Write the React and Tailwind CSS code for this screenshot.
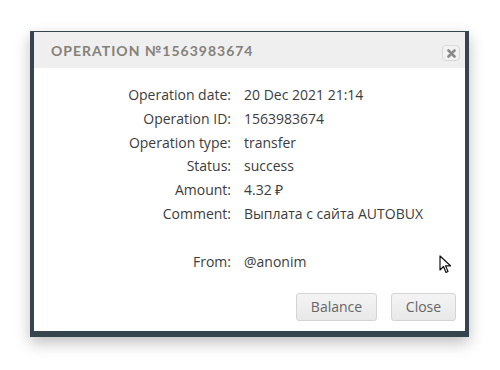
const rows = [
  ["Operation date:", "20 Dec 2021 21:14"],
  ["Operation ID:", "1563983674"],
  ["Operation type:", "transfer"],
  ["Status:", "success"],
  ["Amount:", "4.32 ₽"],
  ["Comment:", "Выплата с сайта AUTOBUX"],
];

export default function App() {
  return (
    <div className="relative w-[500px] h-[370px] bg-white font-['Open_Sans',sans-serif]">
      <div className="absolute left-[30px] top-[31px] w-[439px] border-t border-l-4 border-r-4 border-b-[6px] border-[#36444d] bg-white shadow-[0_6px_14px_rgba(0,0,0,0.25)]">
        {/* Header */}
        <div className="h-[36px] bg-[#efefef] flex items-center justify-between pl-[17px] pr-[5px]">
          <h2 className="text-[14px] font-bold tracking-[1px] text-[#858079] font-['Lato',sans-serif]">
            OPERATION №1563983674
          </h2>
          <button className="w-[18px] h-[16px] mt-[6px] rounded-sm border border-[#d8d8d8] bg-[#f2f2f2] flex items-center justify-center">
            <svg width="9" height="9" viewBox="0 0 9 9">
              <path d="M1.5 1.5 L7.5 7.5 M7.5 1.5 L1.5 7.5" stroke="#8a8a8a" strokeWidth="2.6" strokeLinecap="round" />
            </svg>
          </button>
        </div>

        {/* Body */}
        <div className="pt-[15px] text-[14px] text-[#3c3c3c]">
          {rows.map(([label, value]) => (
            <div key={label} className="flex h-[23.7px] items-center">
              <span className="w-[197px] text-right">{label}</span>
              <span className="ml-[13px]">{value}</span>
            </div>
          ))}
          <div className="flex h-[23.7px] items-center mt-[25px]">
            <span className="w-[197px] text-right">From:</span>
            <span className="ml-[13px]">@anonim</span>
          </div>
        </div>

        {/* Footer */}
        <div className="flex justify-end gap-[14px] pt-[19px] pb-[10px] pr-[9px]">
          <button className="w-[81px] h-[28px] rounded-[3px] border border-[#d4d4d4] bg-gradient-to-b from-[#f4f4f4] to-[#e8e8e8] text-[14px] text-[#666]">
            Balance
          </button>
          <button className="w-[65px] h-[28px] rounded-[3px] border border-[#d4d4d4] bg-gradient-to-b from-[#f4f4f4] to-[#e8e8e8] text-[14px] text-[#666]">
            Close
          </button>
        </div>
      </div>

      {/* Mouse cursor */}
      <svg
        className="absolute left-[439px] top-[255px]"
        width="13"
        height="20"
        viewBox="0 0 13 20"
      >
        <path
          d="M1 1 L1 15 L4.5 11.5 L7 17.5 L9 16.5 L6.5 10.8 L11.5 10.8 Z"
          fill="#fff"
          stroke="#111"
          strokeWidth="1.2"
          strokeLinejoin="round"
        />
      </svg>
    </div>
  );
}
